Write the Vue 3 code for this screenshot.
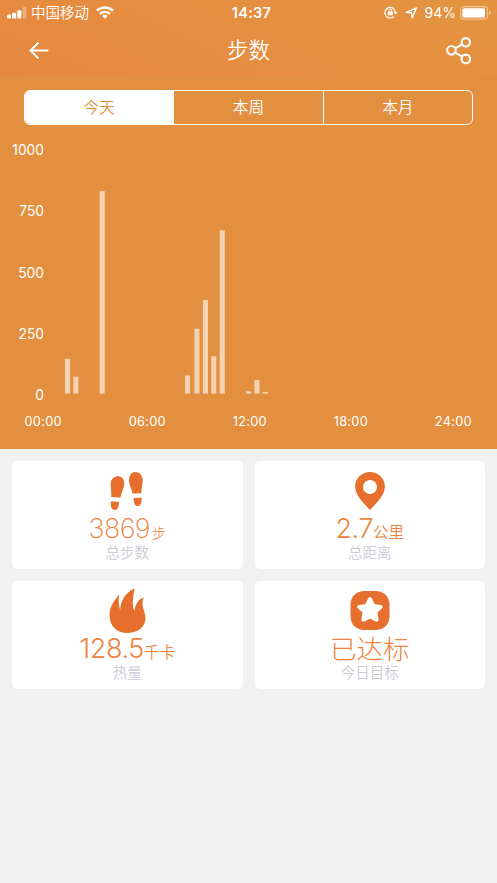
<script setup>
const tabs = ['今天', '本周', '本月']
const yLabels = ['1000', '750', '500', '250', '0']
const xLabels = ['00:00', '06:00', '12:00', '18:00', '24:00']
const bars = [
  { x: 65, h: 35 },
  { x: 73.3, h: 17 },
  { x: 99.6, h: 202.7 },
  { x: 185, h: 18.3 },
  { x: 194.4, h: 65 },
  { x: 202.9, h: 93.6 },
  { x: 211.2, h: 37.5 },
  { x: 219.7, h: 163.4 },
  { x: 246, h: 2.5 },
  { x: 254.4, h: 13.6 },
  { x: 262.8, h: 1.7 }
]
const cards = [
  { icon: 'steps', value: '3869', unit: '步', label: '总步数', thin: true },
  { icon: 'pin', value: '2.7', unit: '公里', label: '总距离' },
  { icon: 'fire', value: '128.5', unit: '千卡', label: '热量' },
  { icon: 'star', value: '已达标', unit: '', label: '今日目标' }
]
</script>

<template>
  <div class="page">
    <header class="top">
      <div class="status">
        <div class="side">
          <svg class="signal" width="20" height="12" viewBox="0 0 20 12" fill="#fff">
            <rect x="0" y="7.4" width="4" height="4" rx="1" />
            <rect x="5.1" y="5.8" width="4" height="5.6" rx="1" />
            <rect x="10.3" y="3.2" width="4" height="8.2" rx="1" />
            <rect x="15.5" y="0" width="4" height="11.4" rx="1" opacity=".3" />
          </svg>
          <span class="carrier">中国移动</span>
          <svg class="wifi" width="18" height="13" viewBox="0 0 18 13">
            <g fill="none" stroke="#fff" stroke-width="2.4">
              <path d="M1 4.7a11.6 11.6 0 0 1 16 0" />
              <path d="M4 7.9a7.2 7.2 0 0 1 10 0" />
            </g>
            <path d="M6.2 9.9a4.2 4.2 0 0 1 5.6 0L9 12.7z" fill="#fff" />
          </svg>
        </div>
        <span class="clock">14:37</span>
        <div class="side right">
          <svg width="14" height="13" viewBox="0 0 14 13" fill="none" stroke="#fff" stroke-width="1.2">
            <path d="M10.1 10.3A5.3 5.3 0 1 1 11.5 6.4" />
            <path d="M9.4 6h4.4l-2.2 2.6z" fill="#fff" stroke="none" />
            <rect x="3.8" y="5.5" width="5" height="3.7" rx=".5" fill="#fff" stroke="none" />
            <path d="M4.8 5.8V4.5a1.5 1.5 0 0 1 3 0v1.3" stroke-width="1" />
          </svg>
          <svg class="locate" width="13" height="12" viewBox="0 0 13 12">
            <path d="M1.2 5.4 11.5 1 7 10.9 6.6 5.8z" fill="none" stroke="#fff" stroke-width="1.4" stroke-linejoin="round" />
          </svg>
          <span class="percent">94%</span>
          <svg class="battery" width="31" height="14" viewBox="0 0 31 14">
            <rect x=".6" y=".6" width="27" height="12.5" rx="3.3" fill="none" stroke="#fff" stroke-opacity=".45" stroke-width="1.1" />
            <rect x="2.4" y="2.3" width="22.6" height="9.1" rx="1.6" fill="#fff" />
            <path d="M29 4.7q1.7.6 1.7 2.2T29 9.1z" fill="#fff" fill-opacity=".45" />
          </svg>
        </div>
      </div>
      <nav class="nav">
        <svg width="20" height="18" viewBox="0 0 20 18" fill="none" stroke="#fff" stroke-width="2">
          <path d="M9.4 .6 1.6 8.500l7.800 7.900M1.600 8.500h17.700" />
        </svg>
        <h1>步数</h1>
        <svg width="26" height="28" viewBox="0 0 26 28" fill="none" stroke="#fff" stroke-width="2.1">
          <circle cx="5.4" cy="13.3" r="4.3" />
          <circle cx="19.8" cy="5.3" r="4.2" />
          <circle cx="19.8" cy="21.9" r="4.3" />
          <path d="m9.200 11.300 7-4M9.200 15.600l7 4.100" />
        </svg>
      </nav>
    </header>

    <section class="chart">
      <div class="tabs">
        <button v-for="(t, i) in tabs" :key="t" :class="{ active: i === 0 }">{{ t }}</button>
      </div>
      <div class="plot">
        <div class="y-axis">
          <span v-for="y in yLabels" :key="y">{{ y }}</span>
        </div>
        <svg class="bars" width="453" height="264" viewBox="44 140 453 264">
          <rect v-for="b in bars" :key="b.x" :x="b.x" :y="393.7 - b.h" width="5.1" :height="b.h" fill="#fff" fill-opacity=".6" />
        </svg>
      </div>
      <div class="x-axis">
        <span v-for="x in xLabels" :key="x">{{ x }}</span>
      </div>
    </section>

    <main class="cards">
      <article v-for="c in cards" :key="c.label" class="card">
        <div class="icon">
          <svg v-if="c.icon === 'steps'" width="34" height="38" viewBox="0 0 34 38" fill="#e66f2d">
            <path d="M1.2 25C1.7 18 .1 15 .8 10.500 1.500 6.500 4.500 3.900 8.500 4.200c4 .3 6.100 3.700 5.700 8.300-.4 4.700-3.100 8.300-3.800 13.100zM1 29.200l8 .7c-.1 4.700-1 8-4.400 8-3.200 0-4.400-4-3.600-8.700zM22.600 21.600c-.6-4.500-3.200-7.300-3.500-12C18.800 4 21.200.1 25.200.1c4.600-.1 7.200 3.500 7.500 8.200.2 4.300-1.600 8.200-1.300 12.900zM23.700 25.900l7.700-.4c.7 4.400-.3 8.200-3.300 8.500-3.400.2-4.400-3.400-4.400-8.100z" />
          </svg>
          <svg v-else-if="c.icon === 'pin'" width="30" height="38" viewBox="0 0 30 38">
            <path fill="#e66f2d" fill-rule="evenodd" d="M15 0C6.600 0 .1 6.500.1 14.600.1 22.800 7.300 30 15 38c7.700-8 14.900-15.200 14.900-23.400C29.900 6.500 23.400 0 15 0zm0 8a7 7 0 1 1 0 14 7 7 0 0 1 0-14z" />
          </svg>
          <svg v-else-if="c.icon === 'fire'" class="fire" width="37" height="46" viewBox="0 0 37 46">
            <path fill="#e66f2d" d="M10.300 6.600C6.200 11.200.5 18.500.5 26.500c0 11.500 6.900 18.500 18.300 18.500 10.500 0 17.700-6.200 17.700-14.900 0-6.300-5.400-12.800-1.700-20.600-5 1.500-8.600 6.600-9.300 13.500C22.400 17.500 24.400 7.600 25.500.5 17.800 3.300 11.500 12 11.200 22 9.600 18.300 9.300 12.500 10.300 6.600z" />
          </svg>
          <svg v-else width="40" height="39" viewBox="0 0 40 39">
            <path fill="#e66f2d" d="M15 0h10C34 0 39.500 5.500 39.500 14v11C39.500 33.500 34 39 25 39H15C6 39 .5 33.500.5 25V14C.5 5.500 6 0 15 0z" />
            <path fill="#fff" stroke="#fff" stroke-width="4" stroke-linejoin="round" d="m20 8 3.300 6.900 7.400 1-5.400 5.200 1.300 7.600-6.600-3.300-6.600 3.300 1.300-7.600-5.400-5.200 7.400-1z" />
          </svg>
        </div>
        <p class="value" :class="{ thin: c.thin, zh: !c.unit }">
          <span>{{ c.value }}</span><small v-if="c.unit">{{ c.unit }}</small>
        </p>
        <p class="label">{{ c.label }}</p>
      </article>
    </main>
  </div>
</template>

<style>
body {
  margin: 0;
  background: #f1f1f1;
}
</style>

<style scoped>
.page {
  width: 497px;
  height: 883px;
  overflow: hidden;
  background: #f1f1f1;
  color: #fff;
  font-family: Inter, "Noto Sans CJK SC", sans-serif;
}
.top {
  height: 77px;
  background: linear-gradient(25deg, #e5883f 0%, #e68d41 45%, #e3943f 100%);
}
.status {
  display: grid;
  grid-template-columns: 1fr auto 1fr;
  align-items: center;
  height: 25px;
  padding: 0 6px 0 7px;
  font-size: 14.5px;
  line-height: 25px;
}
.side {
  display: flex;
  align-items: center;
}
.right {
  justify-content: flex-end;
}
.carrier {
  margin-left: 4px;
  font-weight: 350;
}
.wifi {
  margin-left: 7px;
}
.clock {
  padding-left: 5px;
  font-size: 14.5px;
  font-weight: 600;
  letter-spacing: .3px;
}
.locate {
  margin-left: 7px;
}
.percent {
  margin: 0 4px 0 7px;
  font-size: 14px;
}
.nav {
  display: flex;
  align-items: center;
  justify-content: space-between;
  height: 52px;
  padding: 0 25px 0 29px;
}
h1 {
  margin: 0;
  padding: 0 0 2px 2px;
  font-size: 21.5px;
  font-weight: 350;
  line-height: 50px;
}
.chart {
  display: flex;
  flex-direction: column;
  height: 371.5px;
  padding-top: 13px;
  box-sizing: border-box;
  background: #e2903f;
}
.tabs {
  display: flex;
  height: 35px;
  margin: 0 24px;
  box-sizing: border-box;
  border: 1.4px solid #fff;
  border-radius: 6px;
  overflow: hidden;
}
.tabs button {
  flex: 1;
  padding: 0;
  border: 0;
  background: none;
  color: #fff;
  font: 350 15.7px/32px Inter, "Noto Sans CJK SC", sans-serif;
}
.tabs button + button {
  border-left: 1px solid #fff;
}
.tabs .active {
  background: #fff;
  color: #e2903f;
}
.plot {
  display: flex;
  height: 264px;
  margin-top: 15px;
}
.y-axis {
  display: flex;
  flex-direction: column;
  justify-content: space-between;
  width: 44px;
  margin-bottom: -1px;
  font-size: 13.8px;
  line-height: 20px;
  text-align: right;
}
.x-axis {
  display: flex;
  justify-content: space-between;
  margin: 8px 25px 0 24.5px;
  font-size: 12.8px;
  line-height: 20px;
  letter-spacing: .3px;
}
.cards {
  display: grid;
  grid-template-columns: 1fr 1fr;
  grid-auto-rows: 108px;
  gap: 12px;
  padding: 12.5px 12px;
}
.card {
  display: flex;
  flex-direction: column;
  align-items: center;
  border-radius: 5px;
  background: #fff;
}
.icon {
  display: flex;
  align-items: center;
  justify-content: center;
  height: 59px;
}
.value {
  display: flex;
  align-items: baseline;
  height: 18px;
  margin: 0;
  color: #ee8340;
  font-size: 27px;
  font-weight: 300;
  line-height: 18px;
  letter-spacing: -.4px;
}
.value small {
  font-size: 15.5px;
  font-weight: 350;
  letter-spacing: 0;
}
.value.thin {
  font-weight: 200;
  letter-spacing: -.6px;
}
.value.thin small {
  margin-left: 2px;
  font-size: 14px;
  font-weight: 300;
}
.value.zh {
  font-size: 26.5px;
  letter-spacing: 0;
}
.label {
  margin: 4px 0 0;
  color: #c9ccd3;
  font-size: 14.5px;
  font-weight: 350;
  line-height: 22px;
}
</style>
